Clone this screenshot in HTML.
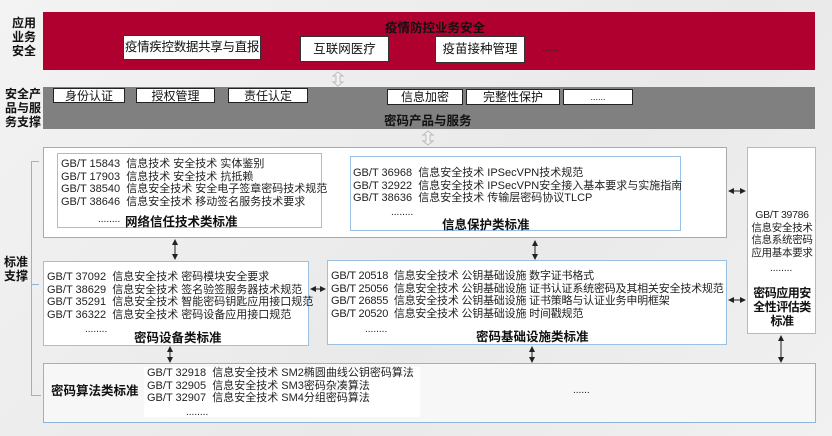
<!DOCTYPE html>
<html><head><meta charset="utf-8"><style>
*{margin:0;padding:0;box-sizing:border-box}
body{width:832px;height:436px;overflow:hidden;background:linear-gradient(135deg,#f3f3f3,#e9e9e9 60%,#f1f1f1);font-family:"Liberation Sans","Noto Sans CJK SC",sans-serif;position:relative;color:#111}
.a{position:absolute}
.b{font-weight:bold}
.wb{position:absolute;background:#fff;border:1px solid #333;font-size:12.5px;text-align:center;line-height:22px;white-space:nowrap}
.gb{position:absolute;background:#fff;border:1px solid #222;font-size:12px;text-align:center;line-height:14px}
.box{position:absolute;background:#fff;border:1.5px solid #9cc0e2}
.t{position:absolute;font-size:11px;line-height:12.7px;white-space:nowrap;color:#222}
.lab{position:absolute;font-size:12px;font-weight:bold;line-height:14px;text-align:center}
.ti{position:absolute;font-size:12.5px;font-weight:bold;white-space:nowrap}
.dot{position:absolute;font-size:10px;line-height:10px}
</style></head><body>
<div class="lab" style="left:8px;top:16px;width:32px">应用<br>业务<br>安全</div>
<div class="a" style="left:43px;top:12px;width:772px;height:58px;background:#b0002f"></div>
<div class="ti" style="left:385px;top:17px;font-size:12.5px">疫情防控业务安全</div>
<div class="wb" style="left:123px;top:35px;width:138px;height:25px;letter-spacing:-0.3px">疫情疾控数据共享与直报</div>
<div class="wb" style="left:300px;top:36px;width:89px;height:26px;line-height:24px">互联网医疗</div>
<div class="wb" style="left:435px;top:36px;width:90px;height:27px;line-height:24px">疫苗接种管理</div>
<div class="dot" style="left:542px;top:44px;color:#222">......</div>

<svg class="a" style="left:331px;top:71px" width="14" height="16"><path d="M7 1 L12 5 H9 V11 H12 L7 15 L2 11 H5 V5 H2 Z" fill="#f3f3f3" stroke="#bbb"/></svg>

<div class="lab" style="left:3px;top:87px;width:40px">安全产<br>品与服<br>务支撑</div>
<div class="a" style="left:43px;top:87px;width:772px;height:42px;background:#808080"></div>
<div class="gb" style="left:53px;top:88px;width:72px;height:15px">身份认证</div>
<div class="gb" style="left:136px;top:88px;width:79px;height:15px">授权管理</div>
<div class="gb" style="left:228px;top:88px;width:80px;height:15px">责任认定</div>
<div class="gb" style="left:387px;top:89px;width:76px;height:16px">信息加密</div>
<div class="gb" style="left:466px;top:89px;width:94px;height:16px">完整性保护</div>
<div class="gb" style="left:563px;top:89px;width:70px;height:16px;font-size:9px">......</div>
<div class="ti" style="left:384px;top:110px">密码产品与服务</div>
<svg class="a" style="left:421px;top:130px" width="14" height="16"><path d="M7 1 L12 5 H9 V11 H12 L7 15 L2 11 H5 V5 H2 Z" fill="#f3f3f3" stroke="#bbb"/></svg>

<div class="a" style="left:31px;top:161px;width:1px;height:234px;background:#8fb4d8"></div>
<div class="a" style="left:31px;top:161px;width:8px;height:1px;background:#8fb4d8"></div>
<div class="a" style="left:31px;top:284px;width:8px;height:1px;background:#8fb4d8"></div>
<div class="a" style="left:31px;top:395px;width:10px;height:1px;background:#8fb4d8"></div>
<div class="lab" style="left:3px;top:255px;width:26px;background:#efefef">标准<br>支撑</div>

<div class="a" style="left:43px;top:147px;width:684px;height:91px;background:#fff;border:1px solid #aaa"></div>
<div class="box" style="left:57px;top:153px;width:265px;height:75px"></div>
<div class="t" style="left:61px;top:158px">GB/T 15843&nbsp; 信息技术 安全技术 实体鉴别<br>GB/T 17903&nbsp; 信息技术 安全技术 抗抵赖<br>GB/T 38540&nbsp; 信息安全技术 安全电子签章密码技术规范<br>GB/T 38646&nbsp; 信息安全技术 移动签名服务技术要求</div>
<div class="dot" style="left:98px;top:215px">........</div>
<div class="ti" style="left:125px;top:211px">网络信任技术类标准</div>

<div class="box" style="left:350px;top:156px;width:331px;height:75px"></div>
<div class="t" style="left:353px;top:167px">GB/T 36968&nbsp; 信息安全技术 IPSecVPN技术规范<br>GB/T 32922&nbsp; 信息安全技术 IPSecVPN安全接入基本要求与实施指南<br>GB/T 38636&nbsp; 信息安全技术 传输层密码协议TLCP</div>
<div class="dot" style="left:391px;top:208px">........</div>
<div class="ti" style="left:442px;top:214px">信息保护类标准</div>

<div class="box" style="left:747px;top:147px;width:69px;height:187px"></div>
<div class="t" style="left:748px;top:209px;text-align:center;width:68px;font-size:10.5px;letter-spacing:-0.3px">GB/T 39786<br>信息安全技术<br>信息系统密码<br>应用基本要求</div>
<div class="dot" style="left:770px;top:264px">........</div>
<div class="ti" style="left:748px;top:286px;width:68px;text-align:center;line-height:14px;font-size:12px;letter-spacing:-0.5px">密码应用安<br>全性评估类<br>标准</div>

<div class="box" style="left:43px;top:261px;width:266px;height:85px"></div>
<div class="t" style="left:47px;top:271px">GB/T 37092&nbsp; 信息安全技术 密码模块安全要求<br>GB/T 38629&nbsp; 信息安全技术 签名验签服务器技术规范<br>GB/T 35291&nbsp; 信息安全技术 智能密码钥匙应用接口规范<br>GB/T 36322&nbsp; 信息安全技术 密码设备应用接口规范</div>
<div class="dot" style="left:85px;top:325px">........</div>
<div class="ti" style="left:134px;top:327px">密码设备类标准</div>

<div class="box" style="left:327px;top:260px;width:400px;height:85px"></div>
<div class="t" style="left:331px;top:270px;letter-spacing:-0.2px">GB/T 20518&nbsp; 信息安全技术 公钥基础设施 数字证书格式<br>GB/T 25056&nbsp; 信息安全技术 公钥基础设施 证书认证系统密码及其相关安全技术规范<br>GB/T 26855&nbsp; 信息安全技术 公钥基础设施 证书策略与认证业务申明框架<br>GB/T 20520&nbsp; 信息安全技术 公钥基础设施 时间戳规范</div>
<div class="dot" style="left:365px;top:325px">........</div>
<div class="ti" style="left:476px;top:326px">密码基础设施类标准</div>

<div class="a" style="left:43px;top:363px;width:773px;height:60px;background:#f7f7f7;border:1.5px solid #8fb4d8"></div>
<div class="a" style="left:144px;top:367px;width:276px;height:50px;background:#fff"></div>
<div class="ti" style="left:51px;top:380px">密码算法类标准</div>
<div class="t" style="left:147px;top:367px">GB/T 32918&nbsp; 信息安全技术 SM2椭圆曲线公钥密码算法<br>GB/T 32905&nbsp; 信息安全技术 SM3密码杂凑算法<br>GB/T 32907&nbsp; 信息安全技术 SM4分组密码算法</div>
<div class="dot" style="left:186px;top:408px">........</div>
<div class="dot" style="left:573px;top:386px">......</div>

<svg class="a" style="left:0;top:0" width="832" height="436">
<defs><marker id="m" markerWidth="6" markerHeight="6" refX="5" refY="3" orient="auto-start-reverse"><path d="M0 0 L6 3 L0 6 Z" fill="#222"/></marker></defs>
<g stroke="#222" stroke-width="1" marker-start="url(#m)" marker-end="url(#m)">
<line x1="175" y1="240" x2="175" y2="259"/>
<line x1="535" y1="241" x2="535" y2="259"/>
<line x1="729" y1="191" x2="745" y2="191"/>
<line x1="311" y1="289" x2="325" y2="289"/>
<line x1="729" y1="300" x2="745" y2="300"/>
<line x1="532" y1="347" x2="532" y2="362"/>
<line x1="170" y1="347" x2="170" y2="362"/>
<line x1="781" y1="336" x2="781" y2="362"/>
</g></svg>
</body></html>
